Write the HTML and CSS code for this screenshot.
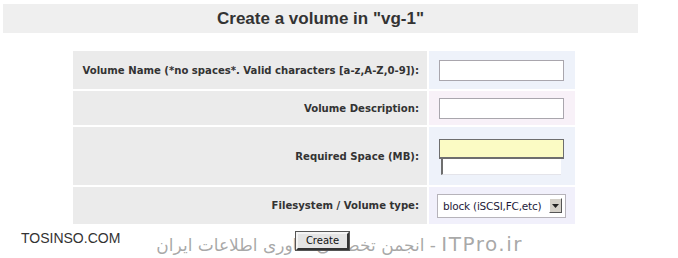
FILE: index.html
```html
<!DOCTYPE html>
<html lang="en">
<head>
    <meta charset="UTF-8">
    <title>Create a volume</title>
    <link rel="stylesheet" href="styles.css">
</head>
<body>
    <div class="page">
        <h2 class="title">Create a volume in "vg-1"</h2>

        <form class="volume-form">
            <table class="form-table">
                <tr class="row-name">
                    <td class="label">Volume Name (*no spaces*. Valid characters [a-z,A-Z,0-9]):</td>
                    <td class="field blue"><input type="text" class="text-input"></td>
                </tr>
                <tr class="row-desc">
                    <td class="label">Volume Description:</td>
                    <td class="field pink"><input type="text" class="text-input"></td>
                </tr>
                <tr class="row-size">
                    <td class="label">Required Space (MB):</td>
                    <td class="field blue">
                        <div class="size-box">
                            <input type="text" class="text-input yellow">
                            <div class="size-hint"></div>
                        </div>
                    </td>
                </tr>
                <tr class="row-type">
                    <td class="label">Filesystem / Volume type:</td>
                    <td class="field lilac">
                        <div class="select-box">
                            <span class="select-text">block (iSCSI,FC,etc)</span>
                            <span class="select-btn">
                                <svg width="9" height="9" viewBox="0 0 9 9"><path d="M1 3h7L4.5 7z" fill="#222"/></svg>
                            </span>
                        </div>
                    </td>
                </tr>
            </table>

            <div class="actions">
                <button type="button" class="create-btn">Create</button>
            </div>
        </form>

        <div class="brand">TOSINSO.COM</div>
        <div class="watermark"><span class="wm-site">ITPro.ir</span> - انجمن تخصصی فناوری اطلاعات ایران</div>
    </div>
</body>
</html>
```

FILE: styles.css
```css
body {
    margin: 0;
    background-color: #fff;
    font-family: "DejaVu Sans", Verdana, sans-serif;
}
.page {
    position: relative;
    width: 678px;
    height: 258px;
    padding-top: 4px;
    box-sizing: border-box;
}
.title {
    margin: 0 40px 0 3px;
    height: 29px;
    line-height: 30px;
    background-color: #efefef;
    text-align: center;
    font-family: "Liberation Sans", Arial, sans-serif;
    font-size: 17px;
    font-weight: bold;
    color: #333;
}
.volume-form {
    margin: 16px 0 0 71px;
}
.form-table {
    border-spacing: 2px;
}
.form-table td {
    padding: 0;
}
.label {
    width: 354px;
    background-color: #ebebeb;
    text-align: right;
    padding-right: 8px !important;
    box-sizing: border-box;
    font-size: 10.1px;
    font-weight: bold;
    color: #333;
}
.field {
    width: 146px;
    padding-left: 10px !important;
    box-sizing: border-box;
}
.blue { background-color: #eef2fa; }
.pink { background-color: #f8f1f8; }
.lilac { background-color: #f1f0fb; }
.row-name { height: 38px; }
.row-desc { height: 34px; }
.row-size { height: 58px; }
.row-type { height: 37px; }
.text-input {
    display: block;
    width: 125px;
    height: 21px;
    box-sizing: border-box;
    border: 1px solid #a9a6ad;
    background-color: #fff;
    margin: 0;
}
.text-input.yellow {
    height: 20px;
    background-color: #fbfbc4;
    border: 1px solid #6e6e6e;
    border-bottom-width: 2px;
}
.size-box {
    margin-top: 1px;
}
.size-hint {
    width: 120px;
    height: 16px;
    margin-left: 2px;
    border-left: 2px solid #6e6e6e;
    border-bottom: 1px solid #e4e4ea;
    background-color: #fff;
    box-sizing: border-box;
}
.select-box {
    display: flex;
    align-items: center;
    justify-content: space-between;
    width: 129px;
    height: 24px;
    margin-left: -2px;
    padding: 0 3px 0 5px;
    box-sizing: border-box;
    border: 1px solid #b6b3ba;
    background-color: #fff;
    font-family: "DejaVu Sans", Verdana, sans-serif;
    font-size: 10.5px;
    letter-spacing: -0.2px;
    color: #1e1a3a;
}
.select-btn {
    display: flex;
    align-items: center;
    justify-content: center;
    width: 11px;
    height: 13px;
    background-color: #d4d0c8;
    border: 1px solid;
    border-color: #fff #555 #555 #fff;
}
.actions {
    padding: 3px 0 0 225px;
}
.create-btn {
    position: relative;
    z-index: 1;
    width: 53px;
    height: 18px;
    padding: 0;
    background-color: #e4e4e4;
    border: 2px solid;
    border-color: #f4f4f4 #333 #333 #f4f4f4;
    outline: 1px solid #555;
    font-family: "DejaVu Sans", Verdana, sans-serif;
    font-size: 10px;
    color: #111;
}
.brand {
    position: absolute;
    left: 21px;
    top: 230px;
    font-family: "Liberation Sans", Arial, sans-serif;
    font-size: 14px;
    color: #333;
}
.watermark {
    position: absolute;
    left: 153px;
    top: 232px;
    width: 370px;
    direction: rtl;
    white-space: nowrap;
    font-family: "DejaVu Sans", sans-serif;
    font-size: 17px;
    color: rgba(130, 130, 130, 0.7);
}
.wm-site {
    font-size: 20px;
    letter-spacing: 1.5px;
}
```
